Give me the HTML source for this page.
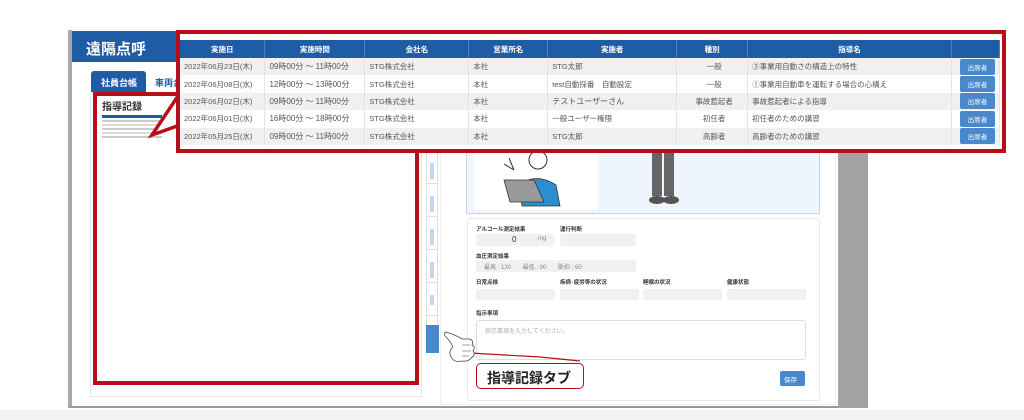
<!DOCTYPE html>
<html><head><meta charset="utf-8"><style>
*{margin:0;padding:0;box-sizing:border-box}
body{width:1024px;height:420px;position:relative;background:#fff;font-family:"Liberation Sans","Noto Sans CJK JP",sans-serif;overflow:hidden}
.a{position:absolute}
table{border-collapse:collapse;width:820px;font-size:7.5px;color:#555}
th{background:#1f5ca6;color:#fff;height:18px;font-weight:bold;border-right:1px solid #4d7fc0;font-size:7.5px}
td{height:17.4px;padding-left:4px;border-right:1px solid #e4e4e4}
tr:nth-child(even) td{background:#f0f0f0}
.btn{display:inline-block;background:#4a88cc;color:#fff;font-size:6.5px;padding:3px 8px;border-radius:2px}
.fld{position:absolute;background:#f1f1f1;height:11px;border-radius:2px;font-size:6px;color:#888}
.lbl{position:absolute;font-size:5.5px;color:#333;font-weight:bold}
.vt{position:absolute;left:427px;width:10px;height:26px;border-bottom:1px solid #ddd}
.vt i{position:absolute;left:3px;top:5px;width:4px;height:16px;background:#c5d6ec}
</style></head><body>
<div class="a" style="left:0;top:410px;width:1024px;height:10px;background:#f3f3f3"></div>
<div class="a" style="left:68px;top:30px;width:800px;height:378px;background:#fff;border-left:4px solid #a8a8a8;border-bottom:2px solid #999"></div>
<div class="a" style="left:72px;top:31px;width:766px;height:31px;background:#1f5ca6"></div>
<div class="a" style="left:86px;top:38px;color:#fff;font-size:15px;font-weight:bold">遠隔点呼</div>
<div class="a" style="left:838px;top:30px;width:30px;height:378px;background:#a3a3a3"></div>
<div class="a" style="left:855px;top:30px;width:8px;height:115px;background:#8a8a8a"></div>
<div class="a" style="left:91px;top:71px;width:55px;height:22px;background:#1f5ca6;border-radius:3px 3px 0 0;color:#fff;font-size:9px;font-weight:bold;padding:5px 0 0 10px">社員台帳</div>
<div class="a" style="left:155px;top:76px;color:#1f5ca6;font-size:9px;font-weight:bold">車両台</div>
<div class="a" style="left:90px;top:92px;width:332px;height:305px;border:1px solid #e8e8e8"></div>
<div class="a" style="left:93px;top:92px;width:326px;height:293px;border:4px solid #b5101a"></div>
<div class="a" style="left:102px;top:98px;font-size:10px;color:#333;font-weight:bold">指導記録</div>
<div class="a" style="left:102px;top:115px;width:60px;height:3px;background:#1f5ca6"></div>
<div class="a" style="left:102px;top:120px;width:60px;height:2px;background:#ccc"></div>
<div class="a" style="left:102px;top:124px;width:60px;height:2px;background:#ddd"></div>
<div class="a" style="left:102px;top:128px;width:60px;height:2px;background:#ccc"></div>
<div class="a" style="left:102px;top:132px;width:60px;height:2px;background:#ddd"></div>
<div class="a" style="left:102px;top:136px;width:60px;height:2px;background:#ccc"></div>
<div class="a" style="left:426px;top:150px;width:12px;height:175px;border-left:1px solid #ddd;border-right:1px solid #ddd"></div>
<div class="vt" style="top:158px"><i></i></div>
<div class="vt" style="top:191px"><i></i></div>
<div class="vt" style="top:224px"><i></i></div>
<div class="vt" style="top:257px"><i></i></div>
<div class="vt" style="top:290px"><i style="height:10px"></i></div>
<div class="a" style="left:426px;top:325px;width:13px;height:28px;background:#4a88cc"></div>
<div class="a" style="left:440px;top:145px;width:396px;height:260px;border:1px solid #eee;background:#fff"></div>
<div class="a" style="left:466px;top:150px;width:354px;height:64px;background:#eef5fc;border:1px solid #c9d4df"></div>
<div class="a" style="left:474px;top:150px;width:124px;height:60px;background:#fff"></div>
<svg class="a" style="left:474px;top:150px" width="260" height="64">
<circle cx="64" cy="10" r="9" fill="#fff" stroke="#333"/>
<path d="M45 35 Q62 22 82 35 L86 56 L48 56Z" fill="#2a8fd0" stroke="#333" stroke-width=".8"/>
<path d="M30 30 L60 30 L70 52 L36 52Z" fill="#999" stroke="#333" stroke-width=".8"/>
<path d="M35 8 L40 20 M30 14 L40 20" stroke="#333"/>
<rect x="178" y="0" width="10" height="46" fill="#666"/><rect x="190" y="0" width="10" height="46" fill="#666"/>
<ellipse cx="183" cy="50" rx="8" ry="4" fill="#555"/><ellipse cx="197" cy="50" rx="8" ry="4" fill="#555"/>
</svg>
<div class="a" style="left:467px;top:218px;width:353px;height:183px;border:1px solid #e8e8e8;border-radius:3px"></div>
<div class="lbl" style="left:476px;top:225px">アルコール測定結果</div>
<div class="lbl" style="left:560px;top:225px">運行判断</div>
<div class="fld" style="left:476px;top:234px;width:78px;height:12px"><span style="position:absolute;left:36px;top:1px;font-size:8px;color:#333">0</span><span style="position:absolute;left:62px;top:2px">mg</span></div>
<div class="fld" style="left:560px;top:234px;width:76px;height:12px"></div>
<div class="lbl" style="left:476px;top:252px">血圧測定結果</div>
<div class="fld" style="left:476px;top:260px;width:160px;height:12px;padding:2px 0 0 8px">最高 : 130 &nbsp; &nbsp; &nbsp; 最低 : 90 &nbsp; &nbsp; &nbsp; 脈拍 : 60</div>
<div class="lbl" style="left:476px;top:278px">日常点検</div>
<div class="lbl" style="left:560px;top:278px">疾病･疲労等の状況</div>
<div class="lbl" style="left:643px;top:278px">睡眠の状況</div>
<div class="lbl" style="left:727px;top:278px">健康状態</div>
<div class="fld" style="left:476px;top:289px;width:79px"></div>
<div class="fld" style="left:560px;top:289px;width:79px"></div>
<div class="fld" style="left:643px;top:289px;width:79px"></div>
<div class="fld" style="left:727px;top:289px;width:79px"></div>
<div class="lbl" style="left:476px;top:309px">指示事項</div>
<div class="a" style="left:476px;top:320px;width:330px;height:40px;border:1px solid #ddd;border-radius:3px;font-size:6px;color:#aaa;padding:5px 8px">指示事項を入力してください。</div>
<div class="a btn" style="left:780px;top:371px;width:25px;height:15px;padding:3px 4px">保存</div>
<svg class="a" style="left:440px;top:325px" width="150" height="50">
<path d="M30 28 L100 32 L140 36" stroke="#b5101a" stroke-width="1.2" fill="none"/>
<path d="M6 7 Q16 10 22 14 L30 14 Q34 16 32 20 Q36 22 33 26 Q36 30 31 33 Q28 37 22 36 Q14 38 11 32 Q8 26 13 22 Q10 16 6 12 Q3 9 6 7Z" fill="#fff" stroke="#444" stroke-width=".8"/>
<path d="M22 20 L30 20 M22 26 L31 26 M22 31 L29 31" stroke="#444" stroke-width=".6"/>
</svg>
<div class="a" style="left:476px;top:363px;width:108px;height:26px;border:1.5px solid #b5101a;border-radius:5px;font-size:14px;font-weight:bold;color:#222;padding:4px 0 0 10px;background:#fff">指導記録タブ</div>
<svg class="a" style="left:140px;top:85px" width="50" height="60">
<path d="M40 8 L12 50 L40 40Z" fill="#fff"/>
<path d="M40 8 L12 50 L40 40" fill="none" stroke="#b5101a" stroke-width="3.5"/>
</svg>
<div class="a" style="left:176px;top:30px;width:830px;height:123px;border:4px solid #b5101a;background:#fff"></div>
<div class="a" style="left:180px;top:40px">
<table>
<colgroup><col style="width:85px"><col style="width:100px"><col style="width:104px"><col style="width:79px"><col style="width:129px"><col style="width:71px"><col style="width:204px"><col style="width:48px"></colgroup>
<tr><th>実施日</th><th>実施時間</th><th>会社名</th><th>営業所名</th><th>実施者</th><th>種別</th><th>指導名</th><th></th></tr>
<tr><td>2022年06月23日(木)</td><td style="font-size:8px">09時00分 ～ 11時00分</td><td>STG株式会社</td><td>本社</td><td>STG太郎</td><td style="text-align:center">一般</td><td>③事業用自動さの構造上の特性</td><td style="text-align:center"><span class="btn">出席者</span></td></tr>
<tr><td>2022年06月08日(水)</td><td style="font-size:8px">12時00分 ～ 13時00分</td><td>STG株式会社</td><td>本社</td><td>test自動採番　自動設定</td><td style="text-align:center">一般</td><td>①事業用自動車を運転する場合の心構え</td><td style="text-align:center"><span class="btn">出席者</span></td></tr>
<tr><td>2022年06月02日(木)</td><td style="font-size:8px">09時00分 ～ 11時00分</td><td>STG株式会社</td><td>本社</td><td style="font-size:8px">テストユーザーさん</td><td style="text-align:center">事故惹起者</td><td>事故惹起者による指導</td><td style="text-align:center"><span class="btn">出席者</span></td></tr>
<tr><td>2022年06月01日(水)</td><td style="font-size:8px">16時00分 ～ 18時00分</td><td>STG株式会社</td><td>本社</td><td>一般ユーザー権限</td><td style="text-align:center">初任者</td><td>初任者のための講習</td><td style="text-align:center"><span class="btn">出席者</span></td></tr>
<tr><td>2022年05月25日(水)</td><td style="font-size:8px">09時00分 ～ 11時00分</td><td>STG株式会社</td><td>本社</td><td>STG太郎</td><td style="text-align:center">高齢者</td><td>高齢者のための講習</td><td style="text-align:center"><span class="btn">出席者</span></td></tr>
</table></div>
</body></html>
